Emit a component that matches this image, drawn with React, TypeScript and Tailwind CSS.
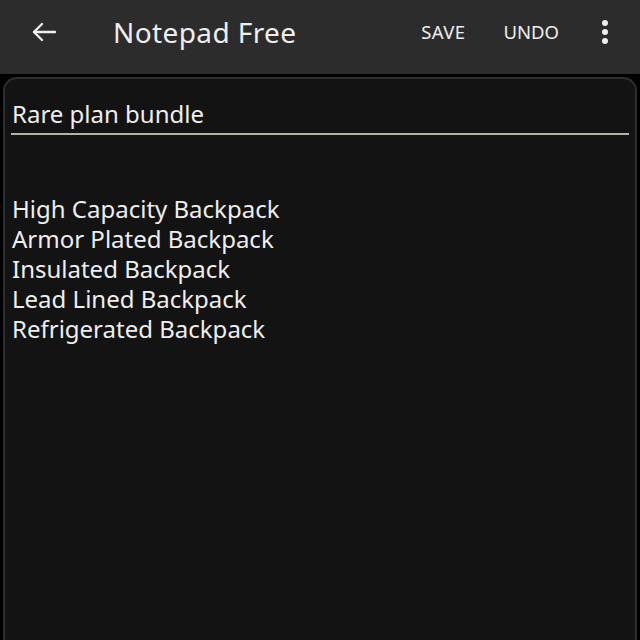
import React from "react";

const items = [
  "High Capacity Backpack",
  "Armor Plated Backpack",
  "Insulated Backpack",
  "Lead Lined Backpack",
  "Refrigerated Backpack",
];

const App: React.FC = () => {
  return (
    <div className="w-[640px] h-[640px] bg-black flex flex-col overflow-hidden font-['Noto_Sans',sans-serif] text-[#eeeeee]">
      {/* Top bar */}
      <div className="h-[74px] bg-[#2c2c2c] flex items-center shrink-0 pb-[10px]">
        <button className="w-[88px] h-full flex items-center justify-center">
          <svg width="26" height="22" viewBox="0 0 26 22" fill="none" stroke="#eeeeee" strokeWidth="2.4" strokeLinecap="round" strokeLinejoin="round">
            <path d="M24 11H3" />
            <path d="M11 3L3 11L11 19" />
          </svg>
        </button>
        <h1 className="ml-[25px] text-[28px] leading-none tracking-[0.4px]">Notepad Free</h1>
        <div className="ml-auto flex items-center">
          <span className="text-[18.5px] tracking-[0.4px] mr-[38px]">SAVE</span>
          <span className="text-[18.5px] mr-[43px]">UNDO</span>
          <div className="flex flex-col gap-[3px] items-center mr-[32px]">
            <span className="w-[6px] h-[6px] rounded-full bg-[#eeeeee]" />
            <span className="w-[6px] h-[6px] rounded-full bg-[#eeeeee]" />
            <span className="w-[6px] h-[6px] rounded-full bg-[#eeeeee]" />
          </div>
        </div>
      </div>

      {/* Note card */}
      <div className="flex-1 mt-[3px] mx-[3px] bg-[#131313] border-2 border-b-0 border-[#2e2e2e] rounded-t-[14px] pl-[6px] pr-[6px] pt-[20px]">
        <div>
          <div className="text-[24px] leading-[30px] px-[1px]">Rare plan bundle</div>
          <div className="h-[2px] bg-[#b4b4a6] mt-[4px]" />
        </div>
        <div className="mt-[59px] px-[1px]">
          {items.map((item) => (
            <div key={item} className="text-[24px] leading-[30px]">
              {item}
            </div>
          ))}
        </div>
      </div>
    </div>
  );
};

export default App;
